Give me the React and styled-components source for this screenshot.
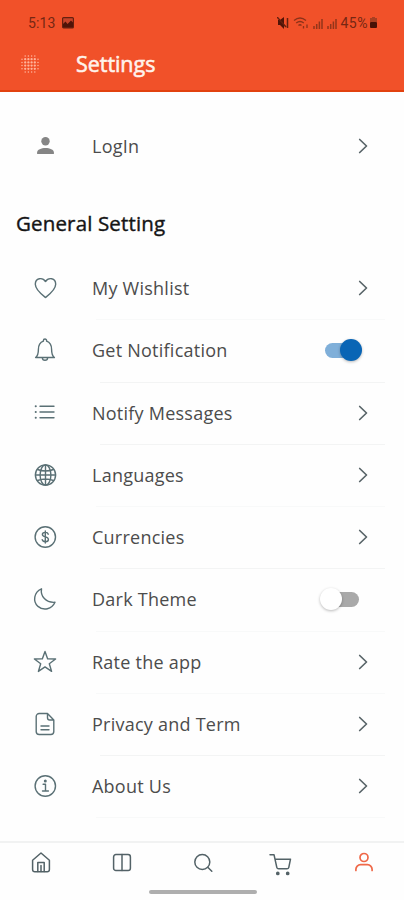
import React from "react";
import styled, { createGlobalStyle } from "styled-components";

const Global = createGlobalStyle`
  * { box-sizing: border-box; }
  body { margin: 0; background: #fefefe; }
`;
const Screen = styled.div`
  width: 404px; height: 900px; overflow: hidden;
  display: flex; flex-direction: column;
  background: #fefefe; color: #4c4c4c;
  font-family: "Open Sans", sans-serif;
`;
const Header = styled.header`
  height: 92px; flex: none; background: #f15129;
  border-bottom: 2px solid #e2410f;
`;
const StatusBar = styled.div`
  height: 46px; padding: 0 26px 0 28px;
  display: flex; align-items: center; justify-content: space-between;
  font: 14px Roboto, sans-serif; color: #752713;
`;
const StatusGroup = styled.div`
  display: flex; align-items: center; gap: ${(p) => p.$gap}px;
`;
const StatusText = styled.span`
  letter-spacing: ${(p) => p.$spacing || 0}px;
`;
const TitleBar = styled.div`
  height: 36px; padding-left: 20px; display: flex; align-items: center;
`;
const Title = styled.h1`
  margin: 0 0 0 36px; color: #fff3eb;
  font: 500 21.5px/30px "Open Sans", sans-serif; letter-spacing: -0.05px;
  -webkit-text-stroke: 0.55px currentColor;
`;
const Icon = styled.svg`
  display: block; flex: none; overflow: visible; fill: none;
  stroke: currentColor; stroke-width: ${(p) => p.$weight || 1.4};
  stroke-linecap: round; stroke-linejoin: round;
`;
const Row = styled.div`
  height: 62.25px; flex: none; padding: 0 36.5px 0 33px;
  display: flex; align-items: center;
`;
const IconSlot = styled.span`
  width: 24px; height: 24px; margin-right: 35px; flex: none;
  color: ${(p) => p.$color || "#5a7075"};
`;
const Label = styled.span`
  flex: 1; font-size: 18px; line-height: 24px; letter-spacing: 0.24px;
  white-space: nowrap;
`;
const Chevron = styled(Icon)`
  color: #596569;
`;
const Account = styled.section`
  padding-top: 23px; height: 108px; flex: none;
`;
const Heading = styled.h2`
  margin: 0; padding-left: 16px; height: 57px; flex: none;
  font-size: 20.5px; font-weight: 500; line-height: 47px; letter-spacing: 0.15px; color: #151515;
  -webkit-text-stroke: 0.4px currentColor;
`;
const List = styled.section`
  height: 584px; flex: none;
`;
const Divider = styled.div`
  height: 1px; margin: 0 19px -1px ${(p) => (p.$faint ? 96 : 100)}px;
  background: ${(p) => (p.$faint ? "#f8f9f9" : "#f3f4f4")};
`;
const Track = styled.span`
  width: 35px; height: 15px; border-radius: 8px; flex: none;
  display: flex; align-items: center;
  justify-content: ${(p) => (p.$on ? "flex-end" : "flex-start")};
  margin-right: ${(p) => (p.$on ? 7.5 : 8.5)}px;
  background: ${(p) => (p.$on ? "#7fafd9" : "#a9a9a9")};
`;
const Thumb = styled.span`
  width: 22px; height: 22px; border-radius: 50%; flex: none;
  margin: ${(p) => (p.$on ? "0 -2px 0 0" : "0 0 0 -4px")};
  background: ${(p) => (p.$on ? "#0965b5" : "#fff")};
  box-shadow: 0 1px 3px rgba(0, 0, 0, 0.28);
`;
const Nav = styled.nav`
  height: 45px; flex: none; border-top: 2px solid #f1f2f2;
  padding: 8px 28px 0 29px; display: flex; justify-content: space-between;
`;
const NavItem = styled.span`
  width: 24px; height: 24px; color: ${(p) => (p.$active ? "#ef6848" : "#536267")};
`;
const HomeBar = styled.div`
  width: 108px; height: 4px; margin: 4px 0 0 149px; border-radius: 2px; background: #aeaeae; flex: none;
`;

const shapes = {
  user: <g fill="currentColor" stroke="none"><circle cx="12.500" cy="7.300" r="4.200" /><path d="M4.100 20v-1.600c0-2.800 4.200-4.400 8.400-4.400s8.400 1.600 8.400 4.400V20z" /></g>,
  heart: <path d="M12.500 21.500C8.500 18.400 2.500 14 2.300 8.300 2.400 2 9.500 .8 12.500 5.500 15.500 .8 22.600 2 22.700 8.300 22.500 14 16.500 18.400 12.500 21.500z" />,
  bell: <><path d="M2.600 19.500C5 17.800 5.400 14.900 5.400 11.500 5.400 7.100 7.500 4.200 10.400 3.200V2.600a1.600 1.600 0 0 1 3.200 0v.6c2.900 1 5 3.900 5 8.300 0 3.400.4 6.300 2.800 8z" /><path d="M9.400 19.700a2.600 2.600 0 0 0 5.200 0" /></>,
  list: <><path d="M7 5.200H21M7 11H21M7 16.800H21" /><path strokeWidth="2" d="M2.700 5.200h.1M2.700 11h.1M2.700 16.800h.1" /></>,
  globe: <><circle cx="12.500" cy="12" r="10.100" /><ellipse cx="12.500" cy="12" rx="5.400" ry="10.100" /><path d="M12.500 2v20M2.500 12h20M4.500 6.500q8 3 16 0M4.500 17.500q8-3 16 0" /></>,
  dollar: <><circle cx="12.300" cy="12" r="10.200" /><path d="M15.300 9.200C14.600 6.700 9.400 6.800 9.400 9.500c0 3.200 6 1.700 6 5 0 2.900-5.600 2.900-6.200.2M12.300 6v12" /></>,
  moon: <path d="M8.500 1.800C7.300 9.200 12.800 16 22 15.300 18.800 22.400 10.500 24.100 5 19.400-.4 14.500.7 5.200 8.500 1.800z" />,
  star: <path d="M12 1.500l2.700 7.400 7.900.1-6.300 4.700 2.300 7.700-6.600-4.500-6.600 4.500 2.300-7.700L1.400 9l7.900-.1z" />,
  file: <path d="M14.500 1.500H6.200a3 3 0 0 0-3 3v15a3 3 0 0 0 3 3h11.600a3 3 0 0 0 3-3V8zM14.500 1.500v4.300a2.200 2.200 0 0 0 2.200 2.200h4.100M8 14h8M8 17.800h8" />,
  info: <><circle cx="12.300" cy="12" r="10.200" /><path d="M10.100 10.200h2.400v6.700M9.500 17h5.900" /><circle cx="12.300" cy="7" r=".8" fill="currentColor" /></>,
  home: <><path d="M3.600 9.200L12 2l8.400 7.200v9.300a2.300 2.300 0 0 1-2.300 2.300H5.900a2.300 2.300 0 0 1-2.300-2.300z" /><path d="M8.800 20.500v-9h6.400v9M12 14.500v6" /></>,
  book: <><rect x="3.600" y="3.600" width="16.800" height="15.900" rx="2.300" /><path d="M12 3.600v16" /></>,
  search: <><circle cx="11.300" cy="11" r="7.500" /><path d="M17 16.500l3.800 3.800" /></>,
  cart: <><path d="M-1 3.700h4l2.800 12.600c.2.900.9 1.500 1.800 1.500h8.300c1 0 1.700-.6 1.900-1.500L19.500 8.200H4.200" /><circle cx="6.800" cy="22.400" r="1.100" fill="currentColor" /><circle cx="16.700" cy="22.400" r="1.100" fill="currentColor" /></>,
  profile: <><circle cx="12" cy="6.500" r="4" /><path d="M3.900 19.500v-1.200a4.600 4.600 0 0 1 4.600-4.600h7a4.600 4.600 0 0 1 4.600 4.600v1.200" /></>,
};

const Glyph = ({ name, weight }) => <Icon width="24" height="24" viewBox="0 0 24 24" $weight={weight}>{shapes[name]}</Icon>;
const Arrow = () => <Chevron width="10" height="16" viewBox="0 0 10 16" $weight={1.7}><path d="M1.700 1.500L8.500 8l-6.800 6.500" /></Chevron>;
const Switch = ({ on }) => <Track $on={on}><Thumb $on={on} /></Track>;

const dots = [];
for (let y = 0; y < 6; y++) for (let x = 0; x < 6; x++) {
  const corner = (x === 0 || x === 5) && (y === 0 || y === 5);
  if (!corner) dots.push(<circle key={`${x}${y}`} cx={2 + x * 3.2} cy={2 + y * 3.2} r={x > 0 && x < 5 && y > 0 && y < 5 ? 1.15 : 0.75} />);
}

const items = [
  { icon: "heart", text: "My Wishlist", faint: true },
  { icon: "bell", text: "Get Notification", toggle: true, on: true },
  { icon: "list", text: "Notify Messages" },
  { icon: "globe", text: "Languages", faint: true },
  { icon: "dollar", text: "Currencies" },
  { icon: "moon", text: "Dark Theme", toggle: true, on: false, faint: true },
  { icon: "star", text: "Rate the app", faint: true },
  { icon: "file", text: "Privacy and Term" },
  { icon: "info", text: "About Us", faint: true },
];

export default function App() {
  return (
    <Screen>
      <Global />
      <Header>
        <StatusBar>
          <StatusGroup $gap={6}>
            <StatusText $spacing={0.15}>5:13</StatusText>
            <svg width="12" height="12" viewBox="0 0 12 12"><rect x=".6" y=".6" width="10.800" height="10.300" rx="1" fill="#c8442a" stroke="#65200f" strokeWidth="1.200" /><path d="M1 10.500V7l2.500-2.500L5.500 7 9 3.500l2 2v5z" fill="#501408" /></svg>
          </StatusGroup>
          <StatusGroup $gap={4}>
            <svg width="12" height="12" viewBox="0 0 12 12"><path d="M1 3h2l4-3v12L3 8H1z" fill="#501408" /><path d="M0 0l9 10M10.500 1v10" stroke="#65200f" strokeWidth="1.500" /></svg>
            <svg width="16" height="12" viewBox="0 0 16 12" fill="none" stroke="#8c3219" strokeWidth="1.300"><path d="M1 3.500q6-5 12 0M3.200 6q3.800-3 7.600 0M5.500 8.500q1.500-1.500 3 0M10.500 9v2.500M14 7.500V11" /></svg>
            {[0, 1].map((n) => <svg key={n} width="10" height="11" viewBox="0 0 10 11"><path d="M1 8v3M3.700 6v5M6.400 3.500V11M9 1v10" stroke="#93351a" strokeWidth="1.500" /></svg>)}
            <StatusGroup $gap={1}>
              <StatusText $spacing={0.5}>45%</StatusText>
              <svg width="9" height="12" viewBox="0 0 9 12"><path d="M3 0h3v1h2v4H1V1h2z" fill="#a94022" /><rect x="1" y="5" width="7" height="6" rx="1" fill="#471106" /></svg>
            </StatusGroup>
          </StatusGroup>
        </StatusBar>
        <TitleBar>
          <svg width="20" height="20" viewBox="0 0 20 20" fill="#ffb59c">{dots}</svg>
          <Title>Settings</Title>
        </TitleBar>
      </Header>
      <Account>
        <Row><IconSlot $color="#858585"><Glyph name="user" /></IconSlot><Label>LogIn</Label><Arrow /></Row>
      </Account>
      <Heading>General Setting</Heading>
      <List>
        {items.map((item) => (
          <React.Fragment key={item.text}>
            <Row>
              <IconSlot><Glyph name={item.icon} /></IconSlot>
              <Label>{item.text}</Label>
              {item.toggle ? <Switch on={item.on} /> : <Arrow />}
            </Row>
            <Divider $faint={item.faint} />
          </React.Fragment>
        ))}
      </List>
      <Nav>
        <NavItem><Glyph name="home" weight={1.5} /></NavItem>
        <NavItem><Glyph name="book" weight={1.5} /></NavItem>
        <NavItem><Glyph name="search" weight={1.5} /></NavItem>
        <NavItem><Glyph name="cart" weight={1.5} /></NavItem>
        <NavItem $active><Glyph name="profile" weight={1.7} /></NavItem>
      </Nav>
      <HomeBar />
    </Screen>
  );
}
